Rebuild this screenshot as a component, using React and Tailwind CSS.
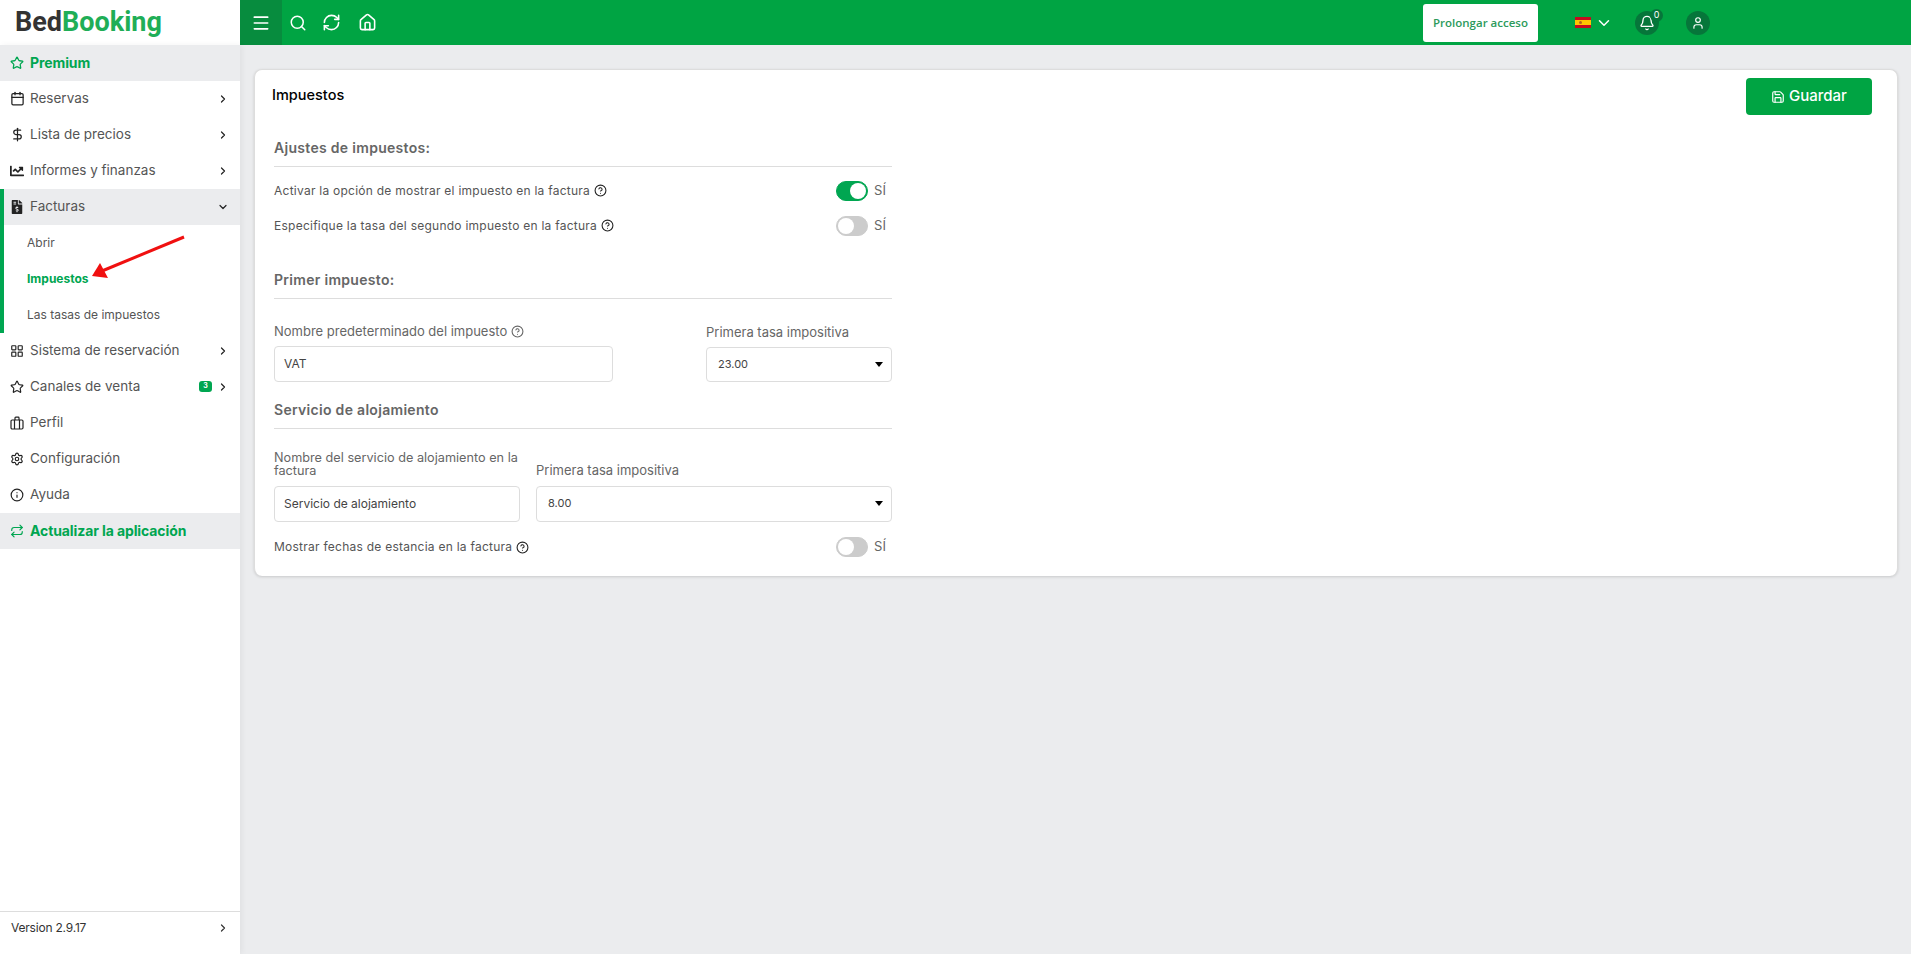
import React from 'react'
import { ChevronRight, ChevronDown, Star, Calendar, DollarSign, Menu, Search, RefreshCw, Home, Bell, User, Save, CircleHelp, LayoutGrid, Settings, Info, Repeat } from 'lucide-react'
import { FaChartLine, FaFileInvoiceDollar } from 'react-icons/fa'

const font = "font-['Inter','Liberation_Sans',sans-serif]"

const Suitcase = () => (
  <svg width="14" height="14" viewBox="0 0 14 14" fill="none" stroke="currentColor" strokeWidth="1.2">
    <rect x="1" y="4" width="12" height="9" rx="1.2" />
    <path d="M4.5 4 V13 M9.5 4 V13 M5 4 V2 a0.8 0.8 0 0 1 0.8 -0.8 H8.2 a0.8 0.8 0 0 1 0.8 0.8 V4" />
  </svg>
)

const NavRow = ({ icon, label, chevron, badge }) => (
  <div className="h-9 flex items-center pl-[10px] pr-[11px] pb-[1px] text-[13.5px] text-[#555]">
    <span className="w-[20px] flex text-[#222]">{icon}</span>
    <span>{label}</span>
    {badge && <span className="ml-auto mr-[5px] w-[13px] h-[11px] rounded-[3px] bg-[#00a651] text-white text-[7px] font-bold flex items-center justify-center">{badge}</span>}
    {chevron && <ChevronRight size={12} strokeWidth={2.4} className={badge ? 'text-[#222]' : 'ml-auto text-[#222]'} />}
  </div>
)

const GreenRow = ({ icon, label }) => (
  <div className="h-9 flex items-center pl-[10px] pb-[1px] bg-[#ebecee] text-[14px] font-bold text-[#00a651] tracking-[-0.1px]">
    <span className="w-[20px] flex">{icon}</span>
    <span>{label}</span>
  </div>
)

const SubRow = ({ label, active }) => (
  <div className={active ? 'h-9 flex items-center pl-[27px] text-[12px] font-bold text-[#00a651]' : 'h-9 flex items-center pl-[27px] text-[12px] text-[#555]'}>{label}</div>
)

const Toggle = ({ on }) => (
  <div className="flex items-center">
    <div className={on ? 'w-8 h-5 rounded-full bg-[#00a651] border border-[#00a651] flex justify-end p-[1px]' : 'w-8 h-5 rounded-full bg-[#ccc] border border-[#ccc] flex p-[1px]'}>
      <div className="w-4 h-4 rounded-full bg-white" />
    </div>
    <span className="ml-[6px] w-[18px] text-[13px] text-[#666]">SÍ</span>
  </div>
)

const Heading = ({ children, className }) => (
  <div className={className}>
    <div className="text-[14px] font-semibold text-[#666] tracking-[0.3px]">{children}</div>
    <div className="h-px bg-[#ddd] mt-[8px]" />
  </div>
)

const Select = ({ value, className }) => (
  <div className={`border border-[#ddd] rounded-[4px] flex items-center justify-between pl-[11px] pr-[8px] text-[11px] text-[#444] ${className}`}>
    {value}
    <span className="w-0 h-0 border-x-[4px] border-x-transparent border-t-[5px] border-t-black" />
  </div>
)

const SwitchRow = ({ label, on, className }) => (
  <div className={`h-[35px] flex items-center justify-between text-[12px] text-[#555] tracking-[0.25px] ${className || ''}`}>
    <span className="flex items-center gap-[4px]">{label} <CircleHelp size={13} className="text-[#222]" /></span>
    <Toggle on={on} />
  </div>
)

const App = () => {
  return (
    <div className={`relative h-screen flex flex-col bg-[#ebecee] overflow-hidden ${font}`}>
      <div className="flex h-[45px] shrink-0">
        <div className="w-[240px] bg-white flex items-center pl-[15px] text-[27px] leading-none font-bold font-['Roboto',sans-serif]">
          <span className="text-[#333]">Bed</span><span className="text-[#1fae57]">Booking</span>
        </div>
        <div className="flex-1 bg-[#00a443] flex items-center text-white">
          <div className="w-[42px] h-full bg-[#078c3e] flex items-center justify-center"><Menu size={20} /></div>
          <div className="ml-[7px] flex items-center">
            <Search size={18} />
            <RefreshCw size={19} className="ml-[15px]" />
            <Home size={19} className="ml-[17px]" />
          </div>
          <div className="ml-auto flex items-center mr-[201px]">
            <div className="w-[115px] h-[38px] bg-white rounded-[3px] flex items-center justify-center text-[11.5px] font-semibold text-[#2c9a5b] font-['Open_Sans',sans-serif]">Prolongar acceso</div>
            <div className="ml-[37px] w-[16px] h-[11px] flex flex-col">
              <div className="h-[3px] bg-[#c60b1e]" />
              <div className="h-[5px] bg-[#ffc400] flex items-center pl-[4px]"><span className="w-[3px] h-[3px] rounded-full bg-[#b5651d]" /></div>
              <div className="h-[3px] bg-[#c60b1e]" />
            </div>
            <ChevronDown size={18} className="ml-[4px]" />
            <div className="relative ml-[22px] w-6 h-6 rounded-full bg-[#06763a] flex items-center justify-center">
              <Bell size={16} />
              <span className="absolute -top-[2px] -right-[4px] w-[13px] h-[13px] rounded-full bg-[#06763a] text-[9px] leading-[12px] text-center">0</span>
            </div>
            <div className="ml-[27px] w-6 h-6 rounded-full bg-[#06763a] flex items-center justify-center"><User size={14} /></div>
          </div>
        </div>
      </div>
      <div className="flex flex-1 min-h-0">
        <div className="w-[240px] bg-white flex flex-col shrink-0 shadow-[2px_0_6px_rgba(0,0,0,0.05)]">
          <GreenRow icon={<Star size={14} strokeWidth={2.2} />} label="Premium" />
          <NavRow icon={<Calendar size={15} />} label="Reservas" chevron />
          <NavRow icon={<DollarSign size={15} />} label="Lista de precios" chevron />
          <NavRow icon={<FaChartLine size={14} />} label="Informes y finanzas" chevron />
          <div className="border-l-4 border-[#00a651]">
            <div className="h-9 flex items-center pl-[6px] pr-[11px] pb-[1px] bg-[#ebecee] text-[13.5px] text-[#555]">
              <span className="w-[20px] flex text-[#222]"><FaFileInvoiceDollar size={14} /></span>
              <span>Facturas</span>
              <ChevronDown size={12} strokeWidth={2.4} className="ml-auto text-[#222]" />
            </div>
            <div className="-ml-1">
              <SubRow label="Abrir" />
              <SubRow label="Impuestos" active />
              <SubRow label="Las tasas de impuestos" />
            </div>
          </div>
          <NavRow icon={<LayoutGrid size={14} />} label="Sistema de reservación" chevron />
          <NavRow icon={<Star size={14} />} label="Canales de venta" chevron badge="3" />
          <NavRow icon={<Suitcase />} label="Perfil" />
          <NavRow icon={<Settings size={14} />} label="Configuración" />
          <NavRow icon={<Info size={14} />} label="Ayuda" />
          <GreenRow icon={<Repeat size={14} />} label="Actualizar la aplicación" />
          <div className="mt-auto h-[43px] pb-[10px] border-t border-[#ddd] flex items-center pl-[11px] pr-[11px] text-[12px] text-[#333] tracking-[-0.2px]">
            Version 2.9.17
            <ChevronRight size={12} strokeWidth={2.4} className="ml-auto" />
          </div>
        </div>
        <div className="flex-1 pl-[14px] pr-[13px] pt-[24px] min-w-0">
          <div className="h-[507px] bg-white rounded-[8px] border border-[#ddd] border-b-0 shadow-[0_1px_3px_rgba(0,0,0,0.15)] relative">
            <div className="pl-[17px] pt-[15px] text-[14.5px] leading-[20px] font-medium text-black">Impuestos</div>
            <div className="absolute right-[25px] top-[8px] w-[126px] h-[37px] bg-[#00a443] rounded-[4px] text-white flex items-center justify-center text-[15px] font-medium gap-[4px]"><Save size={14} />Guardar</div>
            <div className="w-[618px] ml-[19px] mt-[32px]">
              <Heading>Ajustes de impuestos:</Heading>
              <SwitchRow className="mt-[6px]" label="Activar la opción de mostrar el impuesto en la factura" on />
              <SwitchRow label="Especifique la tasa del segundo impuesto en la factura" />
              <Heading className="mt-[26px]">Primer impuesto:</Heading>
              <div className="mt-[23px] flex justify-between items-end">
                <div className="w-[339px]">
                  <div className="text-[13px] text-[#666] flex items-center gap-[4px] mb-[4px]">Nombre predeterminado del impuesto <CircleHelp size={13} /></div>
                  <div className="h-[36px] border border-[#ddd] rounded-[4px] flex items-center pl-[9px] text-[12px] text-[#444]">VAT</div>
                </div>
                <div className="w-[186px]">
                  <div className="text-[13px] text-[#666] mb-[4px]">Primera tasa impositiva</div>
                  <Select value="23.00" className="h-[35px]" />
                </div>
              </div>
              <Heading className="mt-[17px]">Servicio de alojamiento</Heading>
              <div className="mt-[22px] flex items-end gap-[16px]">
                <div className="w-[246px]">
                  <div className="text-[12.7px] leading-[13px] text-[#666] mb-[9px]">Nombre del servicio de alojamiento en la factura</div>
                  <div className="h-[36px] border border-[#ddd] rounded-[4px] flex items-center pl-[9px] text-[12px] text-[#444]">Servicio de alojamiento</div>
                </div>
                <div className="flex-1">
                  <div className="text-[13px] leading-[13px] text-[#666] mb-[9px]">Primera tasa impositiva</div>
                  <Select value="8.00" className="h-[36px]" />
                </div>
              </div>
              <SwitchRow className="mt-[8px]" label="Mostrar fechas de estancia en la factura" />
            </div>
          </div>
        </div>
      </div>
      <svg className="absolute left-[85px] top-[232px]" width="105" height="50" viewBox="85 232 105 50">
        <path d="M184 237 L102 271" stroke="#f01010" strokeWidth="3" fill="none" />
        <path d="M92 276 L100 263 L108 278 Z" fill="#f01010" />
      </svg>
    </div>
  )
}

export default App
